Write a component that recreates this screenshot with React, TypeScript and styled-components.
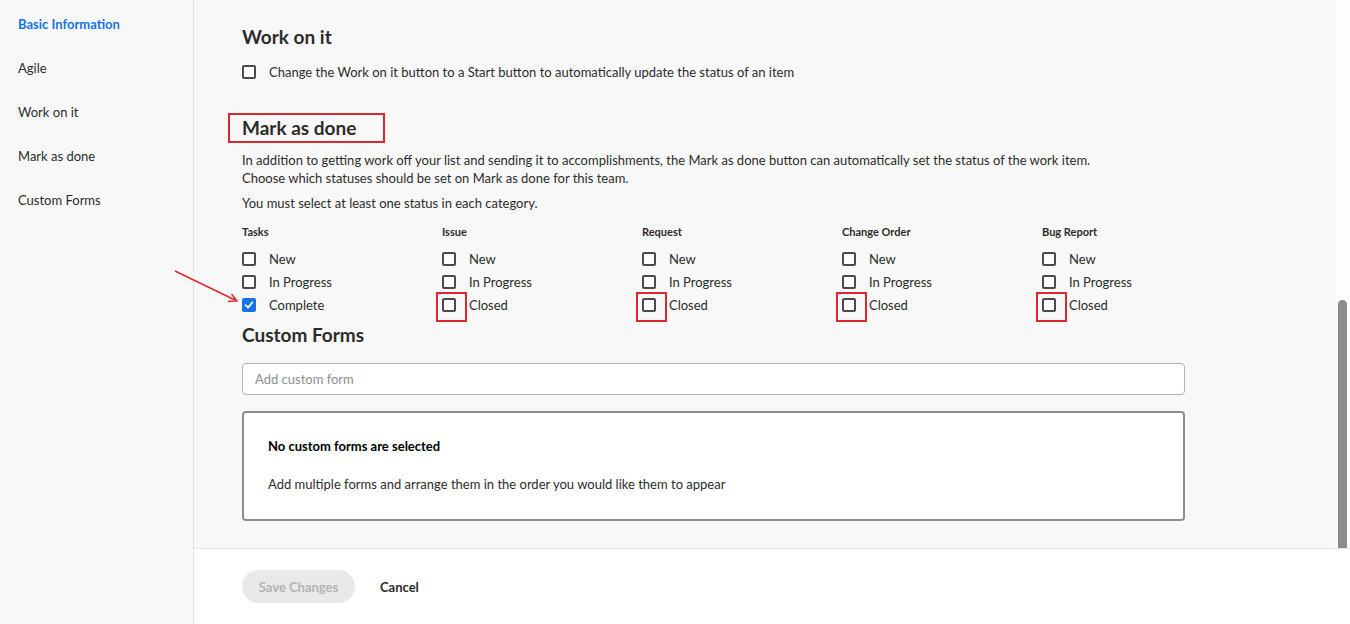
import React from 'react'
import styled, { createGlobalStyle } from 'styled-components'

const GlobalStyle = createGlobalStyle`
    html, body {
        margin: 0;
        padding: 0;
        height: 100%;
        overflow: hidden;
    }
    body {
        font-family: Lato, 'Liberation Sans', sans-serif;
        color: #2c2c2c;
        background: #f8f8f8;
    }
`

const NAV_ITEMS = ['Basic Information', 'Agile', 'Work on it', 'Mark as done', 'Custom Forms']

const CATEGORIES: { title: string; statuses: string[]; checked?: string }[] = [
    { title: 'Tasks', statuses: ['New', 'In Progress', 'Complete'], checked: 'Complete' },
    { title: 'Issue', statuses: ['New', 'In Progress', 'Closed'] },
    { title: 'Request', statuses: ['New', 'In Progress', 'Closed'] },
    { title: 'Change Order', statuses: ['New', 'In Progress', 'Closed'] },
    { title: 'Bug Report', statuses: ['New', 'In Progress', 'Closed'] }
]

const Checkbox = function ({ checked, flagged }: { checked?: boolean; flagged?: boolean }): JSX.Element {
    return (
        <StyledCheckbox checked={!!checked} flagged={!!flagged}>
            {checked && (
                <svg width="10" height="10" viewBox="0 0 10 10">
                    <path d="M1.6 5.2 L4 7.6 L8.4 2.4" fill="none" stroke="#fff" strokeWidth="1.8" strokeLinecap="round" strokeLinejoin="round" />
                </svg>
            )}
        </StyledCheckbox>
    )
}

const App = function (): JSX.Element {
    return (
        <Page>
            <GlobalStyle />
            <Sidebar>
                {NAV_ITEMS.map((item, i) => (
                    <NavItem key={item} active={i === 0}>
                        {item}
                    </NavItem>
                ))}
            </Sidebar>
            <Main>
                <ScrollArea>
                    <Content>
                        <SectionTitle>Work on it</SectionTitle>
                        <OptionRow style={{ marginTop: 13 }}>
                            <Checkbox />
                            <span>Change the Work on it button to a Start button to automatically update the status of an item</span>
                        </OptionRow>

                        <SectionTitle marked style={{ marginTop: 31 }}>
                            Mark as done
                        </SectionTitle>
                        <Paragraph style={{ marginTop: 8 }}>
                            In addition to getting work off your list and sending it to accomplishments, the Mark as done button can
                            automatically set the status of the work item.
                            <br />
                            Choose which statuses should be set on Mark as done for this team.
                        </Paragraph>
                        <Paragraph style={{ marginTop: 7 }}>You must select at least one status in each category.</Paragraph>

                        <Categories>
                            {CATEGORIES.map(category => (
                                <Category key={category.title}>
                                    <CategoryTitle>{category.title}</CategoryTitle>
                                    {category.statuses.map(status => (
                                        <StatusRow key={status}>
                                            <Checkbox
                                                checked={category.checked === status}
                                                flagged={status === 'Closed'}
                                            />
                                            <span>{status}</span>
                                        </StatusRow>
                                    ))}
                                    {category.checked && (
                                        <Pointer width="70" height="36" viewBox="0 0 70 36">
                                            <path d="M2 2 L62 31" stroke="#e0262b" strokeWidth="1.4" fill="none" />
                                            <path d="M55 32.5 L64 32 L58.5 25" stroke="#e0262b" strokeWidth="1.4" fill="none" />
                                        </Pointer>
                                    )}
                                </Category>
                            ))}
                        </Categories>

                        <SectionTitle style={{ marginTop: 7 }}>Custom Forms</SectionTitle>
                        <FormInput placeholder="Add custom form" />
                        <EmptyBox>
                            <strong>No custom forms are selected</strong>
                            <span>Add multiple forms and arrange them in the order you would like them to appear</span>
                        </EmptyBox>
                    </Content>
                    <ScrollTrack>
                        <ScrollThumb />
                    </ScrollTrack>
                </ScrollArea>
                <Footer>
                    <SaveButton type="button" disabled>
                        Save Changes
                    </SaveButton>
                    <CancelButton type="button">Cancel</CancelButton>
                </Footer>
            </Main>
        </Page>
    )
}

export default App

const Page = styled.div`
    display: grid;
    grid-template-columns: 194px 1fr;
    width: 1350px;
    height: 624px;
    overflow: hidden;
`

const Sidebar = styled.nav`
    display: flex;
    flex-direction: column;
    padding-top: 2px;
    background: #f8f8f8;
    border-right: 1px solid #e3e3e3;
`

const NavItem = styled.div<{ active?: boolean }>`
    height: 44px;
    display: flex;
    align-items: center;
    padding-left: 18px;
    font-size: 13px;
    font-weight: ${p => (p.active ? 700 : 400)};
    color: ${p => (p.active ? '#1473e6' : '#2c2c2c')};
`

const Main = styled.main`
    display: flex;
    flex-direction: column;
    min-width: 0;
`

const ScrollArea = styled.div`
    height: 548px;
    display: flex;
    background: #f8f8f8;
`

const Content = styled.div`
    flex: 1;
    padding: 25px 0 0 48px;
    display: flex;
    flex-direction: column;
    align-items: flex-start;
`

const ScrollTrack = styled.div`
    width: 15px;
    display: flex;
    flex-direction: column;
    justify-content: flex-end;
    align-items: center;
    background: #fdfdfd;
`

const ScrollThumb = styled.div`
    width: 9px;
    height: 248px;
    border-radius: 5px 5px 0 0;
    background: #8c8c8c;
`

const SectionTitle = styled.h2<{ marked?: boolean }>`
    margin: 0;
    font-size: 19px;
    line-height: 24px;
    font-weight: 700;
    color: #2c2c2c;
    ${p =>
        p.marked &&
        `
        box-sizing: border-box;
        width: 157px;
        height: 30px;
        margin-left: -14px;
        padding: 1px 12px 0;
        border: 2px solid #e0262b;
        line-height: 24px;
    `}
`

const OptionRow = styled.label`
    display: flex;
    align-items: center;
    gap: 13px;
    height: 20px;
    font-size: 13px;
    color: #2c2c2c;
`

const Paragraph = styled.p`
    margin: 0;
    font-size: 13px;
    line-height: 18px;
    color: #2c2c2c;
`

const Categories = styled.div`
    display: grid;
    grid-template-columns: repeat(5, 200px);
    margin-top: 12px;
`

const Category = styled.div`
    position: relative;
    display: flex;
    flex-direction: column;
`

const CategoryTitle = styled.div`
    font-size: 11px;
    line-height: 16px;
    font-weight: 700;
    color: #2c2c2c;
    margin-bottom: 7px;
`

const StatusRow = styled.label`
    display: flex;
    align-items: center;
    gap: 13px;
    height: 23px;
    font-size: 13px;
    color: #2c2c2c;
`

const StyledCheckbox = styled.span<{ checked: boolean; flagged: boolean }>`
    position: relative;
    box-sizing: border-box;
    width: 14px;
    height: 14px;
    flex-shrink: 0;
    display: flex;
    align-items: center;
    justify-content: center;
    border-radius: 2px;
    border: 2px solid ${p => (p.checked ? '#1473e6' : '#4b4b4b')};
    background: ${p => (p.checked ? '#1473e6' : '#fff')};
    ${p =>
        p.flagged &&
        `
        &::after {
            content: '';
            position: absolute;
            left: -8px;
            top: -8px;
            width: 27px;
            height: 26px;
            border: 2px solid #e0262b;
        }
    `}
`

const Pointer = styled.svg`
    position: absolute;
    left: -69px;
    top: 45px;
`

const FormInput = styled.input`
    box-sizing: border-box;
    margin-top: 16px;
    width: 943px;
    height: 32px;
    padding: 0 12px;
    border: 1px solid #b3b3b3;
    border-radius: 4px;
    background: #fff;
    font-family: inherit;
    font-size: 13px;
    color: #2c2c2c;
    outline: none;
    &::placeholder {
        color: #8e8e8e;
    }
`

const EmptyBox = styled.div`
    box-sizing: border-box;
    margin-top: 16px;
    width: 943px;
    height: 110px;
    padding: 24px 24px 0;
    display: flex;
    flex-direction: column;
    gap: 20px;
    background: #fff;
    border: 2px solid #8e8e8e;
    border-radius: 4px;
    font-size: 13px;
    line-height: 18px;
    color: #2c2c2c;
    strong {
        color: #000;
    }
`

const Footer = styled.footer`
    height: 76px;
    display: flex;
    align-items: center;
    gap: 25px;
    padding-left: 48px;
    background: #fff;
    border-top: 1px solid #e6e6e6;
    box-sizing: border-box;
`

const SaveButton = styled.button`
    width: 113px;
    height: 33px;
    padding: 0;
    border: none;
    border-radius: 17px;
    background: #e9e9e9;
    color: #b3b3b3;
    font-family: inherit;
    font-size: 13px;
    font-weight: 700;
`

const CancelButton = styled.button`
    border: none;
    background: none;
    padding: 0;
    color: #2c2c2c;
    font-family: inherit;
    font-size: 13px;
    font-weight: 700;
`
